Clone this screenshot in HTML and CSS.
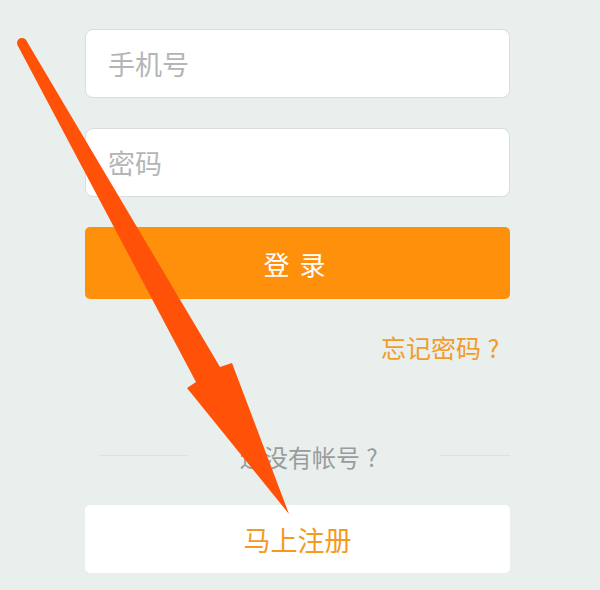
FILE: index.html
```html
<!DOCTYPE html>
<html lang="zh-CN">
<head>
  <meta charset="UTF-8">
  <meta name="viewport" content="width=device-width, initial-scale=1.0">
  <title>登录</title>
  <link rel="stylesheet" href="styles.css">
</head>
<body>
  <div class="login">
    <input class="field" type="text" placeholder="手机号">
    <input class="field" type="password" placeholder="密码">
    <button class="btn-login">登录</button>
    <div class="forgot"><a href="#">忘记密码<span class="qmark">?</span></a></div>
    <div class="divider">
      <span class="line line-left"></span>
      <span class="divider-text">还没有帐号<span class="qmark">?</span></span>
      <span class="line line-right"></span>
    </div>
    <button class="btn-register">马上注册</button>
  </div>

  <svg class="arrow" width="600" height="590" viewBox="0 0 600 590">
    <circle cx="22" cy="43" r="5" fill="#ff5208"/>
    <polygon fill="#ff5208" points="17.7,45.5 196,382 187,388 289,514 232,363 220,367 26.3,40.5"/>
  </svg>
</body>
</html>
```

FILE: styles.css
```css
*{
  box-sizing: border-box;
}
body{
  margin: 0;
  background-color: #e8efed;
  font-family: "Noto Sans CJK SC", "Noto Sans", sans-serif;
  position: relative;
  min-height: 590px;
}
.login{
  width: 425px;
  margin-left: 85px;
  padding-top: 29px;
  display: flex;
  flex-direction: column;
}
.field{
  display: block;
  width: 100%;
  height: 69px;
  margin: 0 0 30px;
  padding: 0 0 0 22px;
  border: 1px solid #d9dedd;
  border-radius: 8px;
  background-color: #fff;
  font-family: inherit;
  font-size: 27px;
  color: #666;
  outline: none;
}
.field::placeholder{
  color: #b4b6b6;
}
.btn-login{
  height: 72px;
  border: none;
  border-radius: 5px;
  background-color: #fe900c;
  color: #fff;
  font-family: inherit;
  font-size: 26px;
  letter-spacing: 10px;
  padding-left: 10px;
  cursor: pointer;
}
/* full-width question mark, glyph centred in its cell */
.qmark{
  display: inline-block;
  width: 1em;
  text-align: center;
}
.forgot{
  margin-top: 33px;
  text-align: right;
  padding-right: 4px;
  font-size: 25px;
  line-height: 30px;
}
.forgot a{
  color: #f39b28;
  text-decoration: none;
}
.divider{
  margin-top: 78px;
  height: 30px;
  display: flex;
  align-items: center;
}
.line{
  height: 1px;
  background-color: #dce2e1;
}
.line-left{
  width: 89px;
  margin-left: 14px;
  margin-right: 52px;
}
.line-right{
  flex: 1;
  margin-left: 56px;
}
.divider-text{
  font-size: 24px;
  color: #9a9c9c;
  line-height: 30px;
  margin-top: 4px;
}
.btn-register{
  margin-top: 35px;
  height: 68px;
  border: none;
  border-radius: 5px;
  background-color: #fff;
  color: #f39a1f;
  font-family: inherit;
  font-size: 27px;
  cursor: pointer;
}
.arrow{
  position: absolute;
  left: 0;
  top: 0;
  pointer-events: none;
}
```
